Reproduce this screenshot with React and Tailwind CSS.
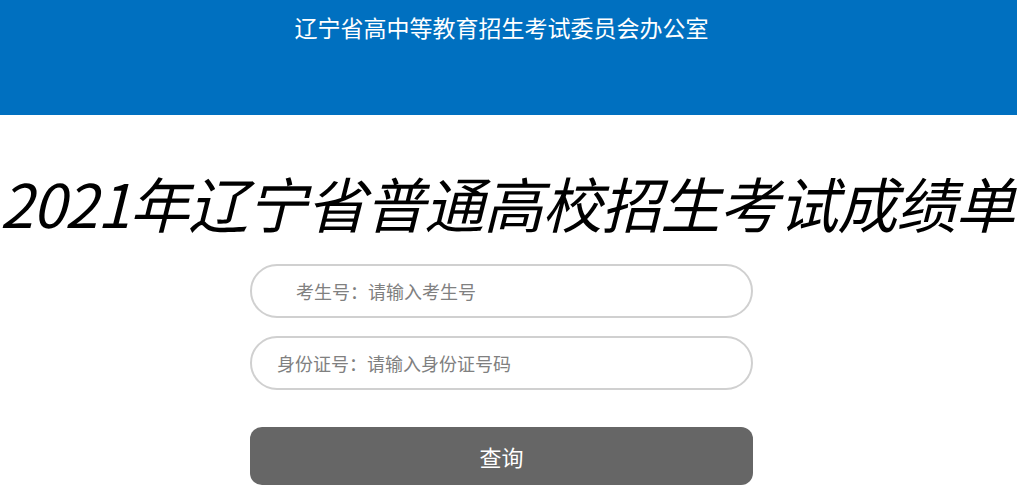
import React from 'react';

const font = { fontFamily: '"Microsoft YaHei", "Noto Sans CJK SC", "Liberation Sans", sans-serif' };

const App = () => {
  return (
    <div className="w-[1017px] h-[500px] bg-white overflow-hidden" style={font}>
      <div className="h-[115px] bg-[#0070c0]">
        <div className="w-[1003px] flex justify-center pt-[11px]">
          <h2 className="text-[23px] leading-[32px] text-white font-normal">辽宁省高中等教育招生考试委员会办公室</h2>
        </div>
      </div>

      <div className="w-[1003px]">
        <h1 className="mt-[47px] text-center text-[60px] leading-[80px] italic text-black font-normal whitespace-nowrap tracking-[-1px]">
          2021年辽宁省普通高校招生考试成绩单
        </h1>

        <form className="w-[503px] mx-auto mt-[22px] flex flex-col" onSubmit={e => e.preventDefault()}>
          <input
            type="text"
            placeholder="考生号：请输入考生号"
            className="h-[54px] w-full rounded-full border-2 border-[#d0d0d0] pl-[44px] text-[18px] text-[#555] placeholder:text-[#808080] outline-none"
          />
          <input
            type="text"
            placeholder="身份证号：请输入身份证号码"
            className="mt-[18px] h-[54px] w-full rounded-full border-2 border-[#d0d0d0] pl-[25px] text-[18px] text-[#555] placeholder:text-[#808080] outline-none"
          />
          <button
            type="submit"
            className="mt-[37px] h-[58px] w-full rounded-[12px] bg-[#666666] text-white text-[22px]"
          >
            查询
          </button>
        </form>
      </div>
    </div>
  );
};

export default App;
